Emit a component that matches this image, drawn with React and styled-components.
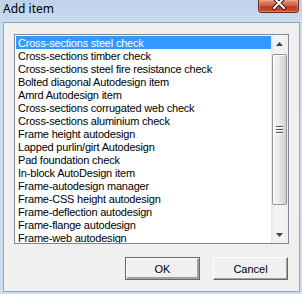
import React from "react";
import styled, { createGlobalStyle } from "styled-components";

const Global = createGlobalStyle`
  html, body { margin: 0; padding: 0; overflow: hidden; background: #c6d8ec; }
  * { box-sizing: border-box; }
`;

const Window = styled.div`
  width: 302px;
  height: 294px;
  display: flex;
  flex-direction: column;
  padding: 0 2px 2px 3px;
  background: linear-gradient(to bottom, #bcd1ea 0px, #c9dbee 22px, #cbdcef 100%);
`;

const TitleBar = styled.div`
  height: 22px;
  display: flex;
  align-items: flex-start;
  justify-content: space-between;
  margin-left: -3px;
  margin-right: -2px;
`;

const Title = styled.div`
  font-family: "Noto Sans", "Open Sans", sans-serif;
  font-size: 12px;
  line-height: 16px;
  padding: 1px 0 0 3px;
  color: #000;
`;

const CloseButton = styled.div`
  width: 41px;
  height: 13px;
  margin-right: 3px;
  border: 1px solid #6e2a1e;
  border-top: none;
  border-radius: 0 0 4px 4px;
  background: linear-gradient(to bottom, #e0957f 0%, #cf5f45 45%, #b83a22 60%, #c9542f 100%);
  box-shadow: inset 0 0 0 1px rgba(255, 200, 180, 0.35);
  display: flex;
  justify-content: center;
  align-items: flex-start;
`;

const Client = styled.div`
  flex: 1;
  background: #f0f0f0;
  border: 1px solid #95a6bb;
  display: flex;
  flex-direction: column;
  padding: 11px 11px 11px 10px;
`;

const ListBox = styled.div`
  width: 275px;
  height: 210px;
  border: 1px solid #828790;
  background: #fff;
  display: flex;
`;

const Items = styled.div`
  flex: 1;
  padding: 1px 0 0 1px;
  overflow: hidden;
`;

const Item = styled.div`
  height: 13px;
  line-height: 14px;
  padding-left: 2px;
  white-space: nowrap;
  font-family: "Liberation Sans", Arial, sans-serif;
  font-size: 11px;
  letter-spacing: -0.2px;
  color: ${(p) => (p.$selected ? "#fff" : "#000")};
  background: ${(p) => (p.$selected ? "#3399ff" : "transparent")};
`;

const ScrollBar = styled.div`
  width: 17px;
  display: flex;
  flex-direction: column;
  background: linear-gradient(to right, #e4e4e4 0px, #f1f1f1 3px, #f3f3f3 12px, #ececec 17px);
`;

const ArrowButton = styled.div`
  height: 17px;
  display: flex;
  align-items: center;
  justify-content: center;
`;

const Track = styled.div`
  flex: 1;
  padding: 2px 0 0 1px;
`;

const Thumb = styled.div`
  width: 15px;
  border: 1px solid #969696;
  border-radius: 2px;
  background: linear-gradient(to right, #f6f6f6 0%, #ececec 40%, #dcdcdc 75%, #cfcfcf 100%);
  box-shadow: inset 1px 1px 0 #fff;
  display: flex;
  align-items: center;
  justify-content: center;
`;

const Grip = styled.div`
  display: flex;
  flex-direction: column;
  gap: 1px;
`;

const GripLine = styled.div`
  width: 7px;
  height: 2px;
  border-top: 1px solid #555;
  border-bottom: 1px solid #fff;
`;

const ButtonRow = styled.div`
  margin-top: 13px;
  display: flex;
  justify-content: flex-end;
  gap: 13px;
  padding-right: 0;
`;

const Button = styled.div`
  width: 75px;
  height: 23px;
  display: flex;
  align-items: center;
  justify-content: center;
  background: #f0f0f0;
  font-family: "Liberation Sans", Arial, sans-serif;
  font-size: 11px;
  color: #000;
  border-top: 1px solid ${(p) => (p.$default ? "#696969" : "#fff")};
  border-left: 1px solid ${(p) => (p.$default ? "#696969" : "#fff")};
  border-right: 1px solid #696969;
  border-bottom: 1px solid #696969;
  box-shadow: ${(p) =>
    p.$default
      ? "inset 1px 1px 0 #fff, inset -1px -1px 0 #a0a0a0, inset -2px -2px 0 #a0a0a0"
      : "inset -1px -1px 0 #a0a0a0"};
  padding-top: 1px;
`;

const items = [
  "Cross-sections steel check",
  "Cross-sections timber check",
  "Cross-sections steel fire resistance check",
  "Bolted diagonal Autodesign item",
  "Amrd Autodesign item",
  "Cross-sections corrugated web check",
  "Cross-sections aluminium check",
  "Frame height autodesign",
  "Lapped purlin/girt Autodesign",
  "Pad foundation check",
  "In-block AutoDesign item",
  "Frame-autodesign manager",
  "Frame-CSS height autodesign",
  "Frame-deflection autodesign",
  "Frame-flange autodesign",
  "Frame-web autodesign",
];

const Arrow = ({ up }) => (
  <svg width="7" height="4" viewBox="0 0 7 4">
    {up ? (
      <polygon points="0,4 7,4 3.5,0" fill="#444" />
    ) : (
      <polygon points="0,0 7,0 3.5,4" fill="#444" />
    )}
  </svg>
);

export default function App() {
  return (
    <>
      <Global />
      <Window>
        <TitleBar>
          <Title>Add item</Title>
          <CloseButton>
            <svg width="16" height="11" viewBox="0 0 16 11">
              <path
                d="M3 -2 L13 8 M13 -2 L3 8"
                stroke="#3a1a14"
                strokeWidth="4"
                strokeLinecap="square"
              />
              <path
                d="M3 -2 L13 8 M13 -2 L3 8"
                stroke="#fff"
                strokeWidth="2"
                strokeLinecap="square"
              />
            </svg>
          </CloseButton>
        </TitleBar>
        <Client>
          <ListBox>
            <Items>
              {items.map((t, i) => (
                <Item key={t} $selected={i === 0}>
                  {t}
                </Item>
              ))}
            </Items>
            <ScrollBar>
              <ArrowButton>
                <Arrow up />
              </ArrowButton>
              <Track>
                <Thumb style={{ height: 151 }}>
                  <Grip>
                    <GripLine />
                    <GripLine />
                    <GripLine />
                  </Grip>
                </Thumb>
              </Track>
              <ArrowButton>
                <Arrow />
              </ArrowButton>
            </ScrollBar>
          </ListBox>
          <ButtonRow>
            <Button $default>OK</Button>
            <Button>Cancel</Button>
          </ButtonRow>
        </Client>
      </Window>
    </>
  );
}
